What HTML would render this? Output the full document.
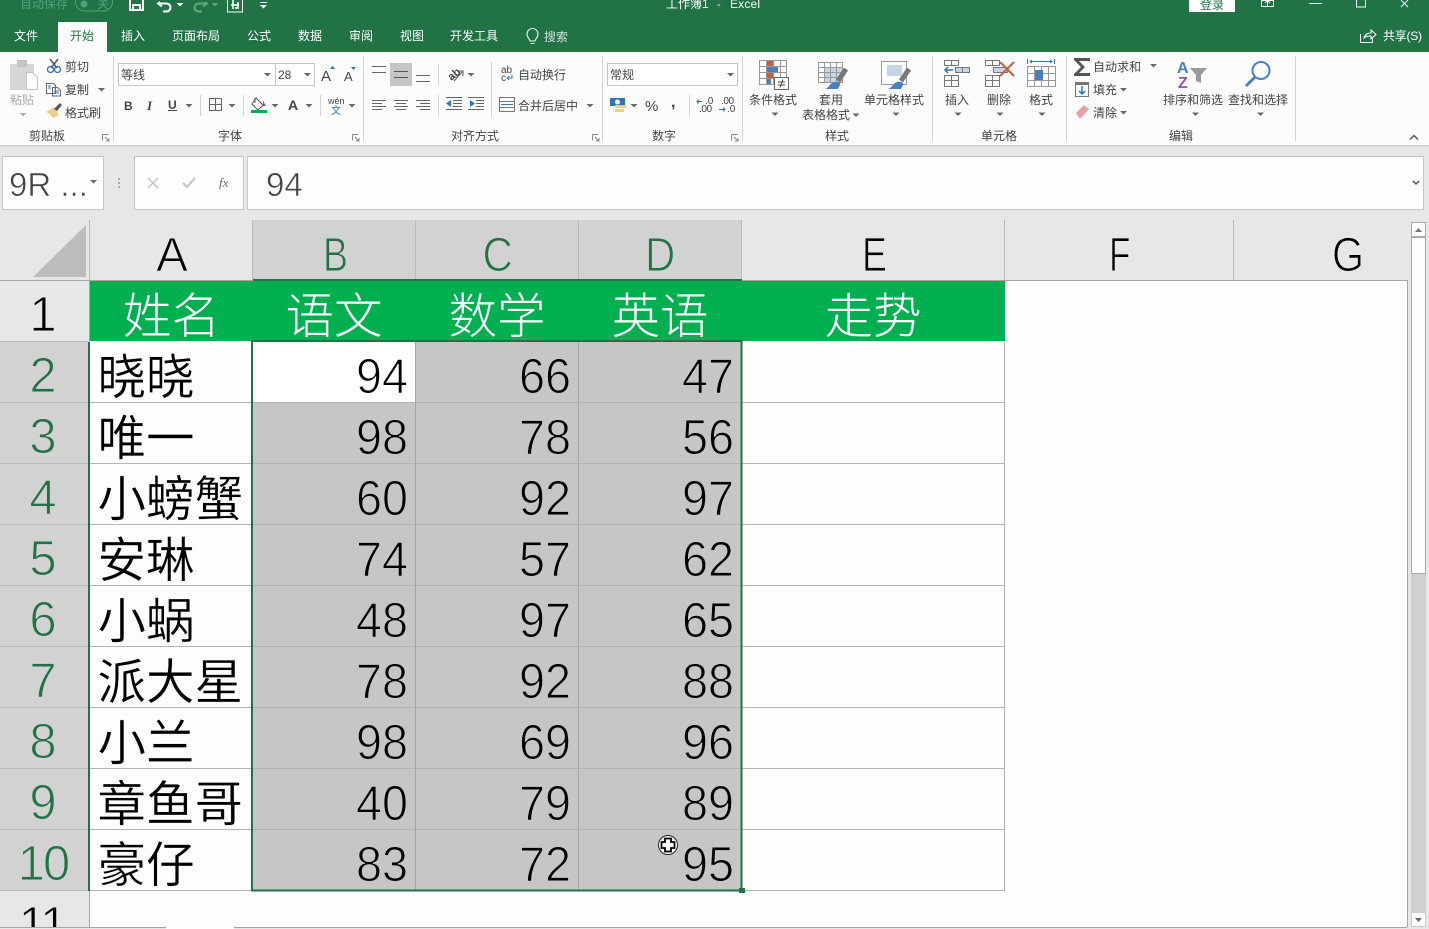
<!DOCTYPE html>
<html lang="zh"><head><meta charset="utf-8"><title>工作簿1 - Excel</title>
<style>
html,body{margin:0;padding:0;width:1429px;height:929px;overflow:hidden;background:#e6e7e7}
svg{position:absolute;left:0;top:0;display:block}
text{font-family:"Liberation Sans","Noto Sans CJK SC",sans-serif;white-space:pre}
.s{font-size:12px;fill:#444}
.w{font-size:12px;fill:#fff}
.cj{font-size:48.5px;fill:#000;font-family:"Noto Sans CJK SC",sans-serif;font-weight:400;stroke:#fdfdfd;stroke-width:.35px}
.hw{font-size:48.5px;fill:#fff;font-family:"Noto Sans CJK SC",sans-serif;font-weight:300;text-anchor:middle}
.n{font-size:49px;fill:#000;stroke:#c6c6c6;stroke-width:1.1px}
.nw{stroke:#fff}
.col{font-size:48px;fill:#000;stroke:#e6e7e7;stroke-width:1.1px}
.colg{font-size:48px;fill:#217346;stroke:#d2d2d2;stroke-width:1.1px}
.rg{font-size:49px;fill:#217346;text-anchor:middle;letter-spacing:-2px;stroke:#d2d2d2;stroke-width:1.1px}
.rb{font-size:49px;fill:#000;text-anchor:middle;letter-spacing:-2px;stroke:#e6e7e7;stroke-width:1.1px}
.ar{fill:#666}
</style></head><body>
<svg width="1429" height="929" viewBox="0 0 1429 929" xmlns="http://www.w3.org/2000/svg">
<defs><path id="a" d="M-3.5 0h7L0 3.5z"/></defs>
<!-- backgrounds -->
<rect width="1429" height="929" fill="#e6e7e7"/>
<rect width="1429" height="52" fill="#217346"/>
<rect y="52" width="1429" height="93" fill="#fcfcfc"/>
<rect y="145" width="1429" height="1.5" fill="#d2d2d2"/>
<!-- title bar -->
<text x="20" y="8" style="font-size:12px;fill:#52a078">自动保存</text>
<rect x="75.500" y="-7" width="37" height="18" rx="9" fill="none" stroke="#52a078"/>
<circle cx="84" cy="4" r="3.500" fill="#52a078"/>
<text x="97" y="8" fill="#52a078" style="font-size:12px">关</text>
<path d="M130 0v10h13V0M133 10V5h7v5" fill="none" stroke="#fff" stroke-width="2"/>
<path d="M160 2l-2 1.500 4 3M159 3.500h7c6 0 6 8 0 8h-3" fill="none" stroke="#fff" stroke-width="2"/>
<use href="#a" x="180" y="3" fill="#dfe" />
<path d="M205 2l2 1.500-4 3M206 3.500h-7c-6 0-6 8 0 8h3" fill="none" stroke="#63a483" stroke-width="2"/>
<use href="#a" x="215" y="3" fill="#63a483"/>
<rect x="227.500" y="-3" width="15" height="15" fill="none" stroke="#fff"/><path d="M233 0v9M231 5h8M238 2v6l-3 0" fill="none" stroke="#fff" stroke-width="1.500"/>
<rect x="260" y="2" width="7" height="1" fill="#fff"/><use href="#a" x="263.500" y="5" fill="#fff"/>
<text x="666" y="8" class="w">工作簿1</text>
<text x="717" y="8" class="w" style="font-size:11px">-</text>
<text x="730" y="8" class="w" style="font-size:12px" textLength="30">Excel</text>
<rect x="1189" y="-2" width="46" height="14" rx="1" fill="#fff"/>
<text x="1200" y="9" style="font-size:12px;fill:#217346">登录</text>
<path d="M1261.500 0.500h12v6h-12zM1267.500 6V1M1265 3l2.500-2.500L1270 3" fill="none" stroke="#fff"/>
<rect x="1309" y="3" width="13" height="1" fill="#fff"/>
<path d="M1356.500-1h9v8h-9z" fill="none" stroke="#fff"/>
<path d="M1401 0l7 7M1408 0l-7 7" fill="none" stroke="#fff"/>
<!-- tabs -->
<rect x="58" y="22" width="49" height="30" fill="#fcfcfc"/>
<text x="14" y="40" class="w">文件</text>
<text x="70" y="40" style="font-size:12px;fill:#217346">开始</text>
<text x="121" y="40" class="w">插入</text>
<text x="172" y="40" class="w">页面布局</text>
<text x="247" y="40" class="w">公式</text>
<text x="298" y="40" class="w">数据</text>
<text x="349" y="40" class="w">审阅</text>
<text x="400" y="40" class="w">视图</text>
<text x="450" y="40" class="w">开发工具</text>
<path d="M530 41c0-2-3-3-3-7a5.500 5.500 0 0 1 11 0c0 4-3 5-3 7zM530.500 43.500h4" fill="none" stroke="#e6f0ea" stroke-width="1.100"/>
<text x="544" y="41" style="font-size:12px;fill:#d0e0d7">搜索</text>
<path d="M1360.500 34v8.500h12V38M1364 38c1-4 4-5 7-5v-3l5 4.500-5 4.500v-3c-3 0-5 0-7 2z" fill="none" stroke="#fff"/>
<text x="1383" y="40" class="w" textLength="39">共享(S)</text>
<!-- ribbon separators -->
<g fill="#d4d4d4">
<rect x="113" y="56" width="1" height="85"/><rect x="363" y="56" width="1" height="85"/><rect x="602" y="56" width="1" height="85"/><rect x="742" y="56" width="1" height="85"/><rect x="932" y="56" width="1" height="85"/><rect x="1066" y="56" width="1" height="85"/><rect x="1295" y="56" width="1" height="85"/>
<rect x="200" y="95" width="1" height="21"/><rect x="243" y="95" width="1" height="21"/><rect x="320" y="95" width="1" height="21"/><rect x="438" y="64" width="1" height="21"/><rect x="438" y="95" width="1" height="21"/><rect x="491" y="62" width="1" height="55"/><rect x="689" y="95" width="1" height="21"/>
</g>
<!-- clipboard -->
<rect x="10" y="64" width="24" height="26" fill="#d6d6d6"/><rect x="17" y="60" width="10" height="7" fill="#c4c4c4"/>
<path d="M26.500 72.500h6l5 5v12h-11z" fill="#fcfcfc" stroke="#c4c4c4"/>
<text x="10" y="104" style="font-size:12px;fill:#aaa">粘贴</text>
<use href="#a" x="23" y="113" fill="#b0b0b0"/>
<path d="M50 59l7 9M58 59l-7 9" stroke="#555" stroke-width="1.500" fill="none"/><circle cx="50.500" cy="69.500" r="3" fill="none" stroke="#2e75b6" stroke-width="1.300"/><circle cx="57.500" cy="69.500" r="3" fill="none" stroke="#2e75b6" stroke-width="1.300"/>
<text x="65" y="71" class="s">剪切</text>
<path d="M46.500 83.500h7l2 2v8h-9zM52.500 87.500h5l3 3v5.500h-8z" fill="#fff" stroke="#666"/><path d="M54 91h5M54 93h5M48 86h3M48 88h3" stroke="#3d78b5"/>
<text x="65" y="94" class="s">复制</text>
<use href="#a" x="101.500" y="88" class="ar"/>
<path d="M46 112l8-5 5 8-6 3c-2-3-4-5-7-6z" fill="#f2cd87"/><path d="M54 109l6-6 2 2-5 6z" fill="#555"/>
<text x="65" y="117" class="s">格式刷</text>
<text x="29" y="140" class="s">剪贴板</text>
<path id="l" d="M102.500 134.500h6M102.500 134.500v6M105 137l4 4M109 138v3h-3" fill="none" stroke="#888"/>
<!-- font -->
<rect x="118.500" y="63.500" width="157" height="22" fill="#fff" stroke="#c6c6c6"/>
<rect x="275.500" y="63.500" width="39" height="22" fill="#fff" stroke="#c6c6c6"/>
<text x="121" y="79" class="s">等线</text><use href="#a" x="267.500" y="73" class="ar"/>
<text x="278" y="79" class="s">28</text><use href="#a" x="307.500" y="73" class="ar"/>
<text x="321" y="81" style="font-size:15px;fill:#444">A</text><path d="M330 69h5l-2.500-3z" fill="#2e75b6"/>
<text x="344" y="81" style="font-size:13px;fill:#444">A</text><path d="M351 67h5l-2.500 3z" fill="#2e75b6"/>
<text x="124" y="110" style="font-size:12px;fill:#444;font-weight:bold">B</text>
<text x="147" y="110" style="font-size:13px;fill:#444;font-style:italic;font-family:'Liberation Serif',serif;font-weight:bold">I</text>
<text x="168" y="109" style="font-size:12px;fill:#444;font-weight:bold">U</text><rect x="168" y="110" width="9" height="1" fill="#444"/>
<use href="#a" x="189" y="104" class="ar"/>
<path d="M209.500 98.500h12v12h-12zM215.500 98.500v12M209.500 104.500h12" fill="none" stroke="#666"/>
<use href="#a" x="232" y="104" class="ar"/>
<path d="M256 98l7 7-5 5-6-6zM255 98v5" fill="#fff" stroke="#555"/><path d="M263 101l3 5h-3z" fill="#2e75b6"/>
<rect x="251" y="110" width="16" height="3" fill="#00b050"/>
<use href="#a" x="275" y="104" class="ar"/>
<text x="288" y="110" style="font-size:14px;fill:#444;font-weight:bold">A</text>
<use href="#a" x="309" y="104" class="ar"/>
<text x="328" y="104" style="font-size:9px;fill:#444">wén</text>
<text x="331" y="114" style="font-size:10px;fill:#2e75b6">文</text>
<use href="#a" x="352" y="104" class="ar"/>
<text x="218" y="140" class="s">字体</text>
<use href="#l" x="250" y="0"/>
<!-- align -->
<rect x="390" y="63" width="22" height="23" fill="#c6c6c6"/>
<g stroke="#666" fill="none">
<path d="M372 66.500h14M372 72.500h14"/>
<path d="M394 71.500h14M394 77.500h14" stroke="#555"/>
<path d="M416 75.500h14M416 81.500h14"/>
<path d="M372 100.500h14M372 103.500h10M372 106.500h14M372 109.500h10"/>
<path d="M394 100.500h14M396 103.500h10M394 106.500h14M396 109.500h10"/>
<path d="M416 100.500h14M420 103.500h10M416 106.500h14M420 109.500h10"/>
<path d="M453 100.500h9M453 103.500h9M453 106.500h9M446 109.500h16M446 97.500h16"/>
<path d="M476 100.500h8M476 103.500h8M476 106.500h8M468 109.500h16M468 97.500h16"/>
</g>
<path d="M446 103.500l5-3.500v7zM475 103.500l-5-3.500v7z" fill="#2e75b6"/>
<text x="447" y="79" transform="rotate(-40 452 74)" style="font-size:11px;fill:#444;font-weight:bold">ab</text>
<path d="M454 81l8-9M458 71h5v5" fill="none" stroke="#555"/>
<use href="#a" x="471" y="73" class="ar"/>
<text x="501" y="73" style="font-size:10px;fill:#444">ab</text><text x="501" y="81" style="font-size:10px;fill:#444">c</text><path d="M512 75v3h-4M509 76l-2 2 2 2" fill="none" stroke="#2e75b6"/>
<text x="518" y="79" class="s">自动换行</text>
<path d="M499.500 97.500h15v14h-15zM499.500 101.500h15M499.500 107.500h15" fill="none" stroke="#777"/><rect x="500" y="102" width="14" height="5" fill="#fcfcfc"/><path d="M501 104.500h12" stroke="#2e75b6"/>
<text x="518" y="110" class="s">合并后居中</text>
<use href="#a" x="590" y="104" class="ar"/>
<text x="451" y="140" class="s">对齐方式</text>
<use href="#l" x="490" y="0"/>
<!-- number -->
<rect x="607.500" y="63.500" width="130" height="22" fill="#fff" stroke="#c6c6c6"/>
<text x="610" y="79" class="s">常规</text><use href="#a" x="730.500" y="73" class="ar"/>
<rect x="610" y="98" width="15" height="8" fill="#2e75b6"/><circle cx="617.500" cy="102" r="2.500" fill="#fff"/><rect x="615" y="105" width="11" height="3" fill="#f2cd87"/><rect x="615" y="109" width="9" height="3" fill="#f2cd87"/>
<use href="#a" x="634" y="104" class="ar"/>
<text x="645" y="111" style="font-size:15px;fill:#444">%</text>
<text x="671" y="107" style="font-size:16px;fill:#444;font-weight:bold">,</text>
<text x="705" y="104" style="font-size:10px;fill:#444">.0</text><text x="699" y="112" style="font-size:10px;fill:#444" textLength="13">.00</text>
<path d="M697 101.500h5M699 99.500l-2 2 2 2" stroke="#2e75b6" fill="none"/>
<text x="721" y="104" style="font-size:10px;fill:#444" textLength="13">.00</text><text x="727" y="112" style="font-size:10px;fill:#444">.0</text>
<path d="M719 109.500h6M723 107.500l2 2-2 2" stroke="#2e75b6" fill="none"/>
<text x="652" y="140" class="s">数字</text>
<use href="#l" x="629" y="0"/>
<!-- styles: conditional -->
<path d="M759.500 60.500h27v24h-27zM759.500 66.500h27M759.500 72.500h27M759.500 78.500h27M766.500 60.500v24M773.500 60.500v24M780.500 60.500v24" fill="#fff" stroke="#999"/>
<rect x="767" y="61" width="6" height="5" fill="#c8603f"/><rect x="767" y="67" width="11" height="5" fill="#4a80bd"/><rect x="767" y="73" width="6" height="5" fill="#c8603f"/><rect x="767" y="79" width="4" height="5" fill="#4a80bd"/>
<rect x="774.500" y="77.500" width="14" height="12" fill="#fff" stroke="#666"/>
<path d="M778 82h7M778 85h7M783 79.500l-3 8" stroke="#444" fill="none"/>
<text x="749" y="104" class="s">条件格式</text><use href="#a" x="775" y="112.500" class="ar"/>
<!-- table format -->
<path d="M818.500 62.500h24v20h-24z" fill="#fff" stroke="#999"/><rect x="825" y="68" width="17" height="14" fill="#c6d5e6"/>
<path d="M818.500 67.500h24M818.500 72.500h24M818.500 77.500h24M824.500 62.500v20M830.500 62.500v20M836.500 62.500v20" fill="none" stroke="#999"/>
<path d="M846 69l-8 12" stroke="#777" stroke-width="5" fill="none"/><path d="M825 89c4-1 5-6 9-7 3-1 7 0 6 3l-2 4z" fill="#4a80bd"/>
<text x="819" y="104" class="s">套用</text>
<text x="802" y="119" class="s">表格格式</text><use href="#a" x="856" y="113.500" class="ar"/>
<!-- cell styles -->
<path d="M881.500 61.500h25v23h-25z" fill="#fff" stroke="#999"/><rect x="887" y="65" width="15" height="11" fill="#c6d5e6"/>
<path d="M909 69l-8 12" stroke="#777" stroke-width="5" fill="none"/><path d="M888 89c4-1 5-6 9-7 3-1 7 0 6 3l-2 4z" fill="#4a80bd"/>
<text x="864" y="104" class="s">单元格样式</text><use href="#a" x="896" y="112.500" class="ar"/>
<text x="825" y="140" class="s">样式</text>
<!-- cells -->
<g fill="none" stroke="#777">
<path d="M944.500 60.500h14v5h-14zM951.500 60.500v5M944.500 75.500h14v11h-14zM951.500 75.500v11M944.500 80.500h14"/>
<path d="M955.500 67.500h14v5h-14zM962.500 67.500v5" fill="#c6d5e6"/>
<path d="M985.500 60.500h14v5h-14zM992.500 60.500v5M985.500 75.500h14v11h-14zM992.500 75.500v11M985.500 80.500h14"/>
<path d="M993.500 67.500h14v5h-14z" fill="#c6d5e6"/>
</g>
<path d="M945 70h8M948 67l-3 3 3 3" fill="none" stroke="#2e75b6" stroke-width="1.500"/>
<path d="M1000 62l14 14M1014 62l-14 14" stroke="#c8603f" stroke-width="2" fill="none"/>
<path d="M1027.500 66.500h28v20h-28zM1027.500 73.500h28M1027.500 80.500h28M1034.500 66.500v20M1041.500 66.500v20M1048.500 66.500v20" fill="#fff" stroke="#999"/>
<rect x="1035" y="70" width="8" height="10" fill="#4a80bd"/>
<path d="M1027.500 59v5M1054.500 59v5M1030 61.500h22M1032 60l-2 1.500 2 1.500M1050 60l2 1.500-2 1.500" stroke="#2e75b6" fill="none"/>
<text x="945" y="104" class="s">插入</text><use href="#a" x="958" y="112.500" class="ar"/>
<text x="987" y="104" class="s">删除</text><use href="#a" x="1000" y="112.500" class="ar"/>
<text x="1029" y="104" class="s">格式</text><use href="#a" x="1042" y="112.500" class="ar"/>
<text x="981" y="140" class="s">单元格</text>
<!-- edit -->
<path d="M1074 58h16v3h-11l6 6-6 6h11v3h-16v-2l7-7-7-7z" fill="#555"/>
<text x="1093" y="71" class="s">自动求和</text><use href="#a" x="1153.500" y="64" class="ar"/>
<rect x="1075.500" y="82.500" width="13" height="14" fill="#fff" stroke="#777"/><rect x="1075" y="82" width="14" height="3" fill="#777"/>
<path d="M1082 86v8M1079 91l3 3 3-3" fill="none" stroke="#2e75b6" stroke-width="1.500"/>
<text x="1093" y="94" class="s">填充</text><use href="#a" x="1123.500" y="88" class="ar"/>
<path d="M1076 113l8-8 5 4-8 9h-2z" fill="#e8a0a8"/>
<text x="1093" y="117" class="s">清除</text><use href="#a" x="1123.500" y="111" class="ar"/>
<text x="1177" y="73" style="font-size:16px;fill:#4a80bd;font-weight:bold">A</text>
<text x="1178" y="88" style="font-size:16px;fill:#8b5ca8;font-weight:bold">Z</text>
<path d="M1190 68h17l-6 7v8l-5-2v-6z" fill="#999"/>
<text x="1163" y="104" class="s">排序和筛选</text><use href="#a" x="1195.500" y="112.500" class="ar"/>
<circle cx="1261" cy="70.500" r="8.500" fill="#fff" stroke="#4a80bd" stroke-width="2"/>
<path d="M1255 77l-9 9" stroke="#4a80bd" stroke-width="3"/>
<text x="1228" y="104" class="s">查找和选择</text><use href="#a" x="1260.500" y="112.500" class="ar"/>
<text x="1169" y="140" class="s">编辑</text>
<path d="M1410 139.500l4-4 4 4" fill="none" stroke="#555" stroke-width="1.500"/>
<!-- formula bar -->
<rect x="2.500" y="156.500" width="101" height="53" fill="#fdfdfd" stroke="#c6c6c6"/>
<text x="9" y="196" style="font-size:33px;fill:#444;stroke:#fdfdfd;stroke-width:.6px">9R ...</text>
<use href="#a" x="93.500" y="180" class="ar"/>
<g fill="#aaa"><rect x="118" y="178" width="2" height="2"/><rect x="118" y="182" width="2" height="2"/><rect x="118" y="186" width="2" height="2"/></g>
<rect x="134.500" y="156.500" width="109" height="53" fill="#fdfdfd" stroke="#c6c6c6"/>
<path d="M148 178l10 10M158 178l-10 10" stroke="#c4c4c4" stroke-width="1.500" fill="none"/>
<path d="M183 183l4 4 8-9" stroke="#c4c4c4" stroke-width="2" fill="none"/>
<text x="219" y="187" style="font-size:13px;fill:#666;font-style:italic;font-family:'Liberation Serif',serif">fx</text>
<rect x="247.500" y="156.500" width="1176" height="53" fill="#fdfdfd" stroke="#c6c6c6"/>
<text x="266" y="196" style="font-size:33px;fill:#444;stroke:#fdfdfd;stroke-width:.6px">94</text>
<path d="M1413 181l3 3 3-3" stroke="#555" stroke-width="1.500" fill="none"/>
<!-- sheet body -->
<rect x="90" y="281" width="1317" height="646" fill="#fdfdfd"/>
<!-- headers -->
<rect x="253" y="220" width="489" height="60" fill="#d2d2d2"/>
<rect x="0" y="342" width="88" height="549" fill="#d2d2d2"/>
<path d="M33 277L86 225V277z" fill="#bcbcbc"/>
<g fill="#bbb">
<rect x="89" y="220" width="1" height="60"/><rect x="252" y="220" width="1" height="60"/><rect x="415" y="220" width="1" height="60"/><rect x="578" y="220" width="1" height="60"/><rect x="741" y="220" width="1" height="60"/><rect x="1004" y="220" width="1" height="60"/><rect x="1233" y="220" width="1" height="60"/>
<rect y="341" width="88" height="1"/><rect y="402" width="88" height="1"/><rect y="463" width="88" height="1"/><rect y="524" width="88" height="1"/><rect y="585" width="88" height="1"/><rect y="646" width="88" height="1"/><rect y="707" width="88" height="1"/><rect y="768" width="88" height="1"/><rect y="829" width="88" height="1"/><rect y="890" width="88" height="1"/>
</g>
<rect x="0" y="280" width="1408" height="1" fill="#a6a6a6"/>
<rect x="253" y="279" width="489" height="2" fill="#217346"/>
<rect x="1407" y="281" width="1" height="646" fill="#a6a6a6"/>
<rect x="89" y="281" width="1" height="61" fill="#a6a6a6"/><rect x="89" y="891" width="1" height="37" fill="#a6a6a6"/>
<rect x="88" y="342" width="2" height="549" fill="#217346"/>
<!-- title row -->
<rect x="90" y="281" width="915" height="60" fill="#00b050"/>
<!-- selection fill -->
<rect x="253" y="342" width="489" height="549" fill="#c6c6c6"/>
<rect x="253" y="342" width="162" height="60" fill="#fff"/>
<!-- gridlines -->
<g fill="#b4b4b4">
<rect x="90" y="402" width="915" height="1"/><rect x="90" y="463" width="915" height="1"/><rect x="90" y="524" width="915" height="1"/><rect x="90" y="585" width="915" height="1"/><rect x="90" y="646" width="915" height="1"/><rect x="90" y="707" width="915" height="1"/><rect x="90" y="768" width="915" height="1"/><rect x="90" y="829" width="915" height="1"/><rect x="90" y="890" width="915" height="1"/>
<rect x="1004" y="342" width="1" height="549"/>
<rect x="415" y="342" width="1" height="549" fill="#a6a6a6"/><rect x="578" y="342" width="1" height="549" fill="#a6a6a6"/>
</g>
<!-- selection border -->
<rect x="252" y="341" width="489.500" height="549.500" fill="none" stroke="#217346" stroke-width="2"/>
<rect x="739" y="888" width="6" height="5" fill="#217346"/>
<!-- column labels -->
<text x="156" y="271" class="col">A</text>
<text x="323" y="271" class="colg" textLength="25" lengthAdjust="spacingAndGlyphs">B</text>
<text x="482.500" y="271" class="colg" textLength="30.300" lengthAdjust="spacingAndGlyphs">C</text>
<text x="645" y="271" class="colg" textLength="30.300" lengthAdjust="spacingAndGlyphs">D</text>
<text x="862" y="271" class="col" textLength="25" lengthAdjust="spacingAndGlyphs">E</text>
<text x="1109" y="271" class="col" textLength="21.500" lengthAdjust="spacingAndGlyphs">F</text>
<text x="1332" y="271" class="col" textLength="32" lengthAdjust="spacingAndGlyphs">G</text>
<!-- row labels -->
<text x="42" y="331" class="rb">1</text>
<text x="42" y="392" class="rg">2</text>
<text x="42" y="453" class="rg">3</text>
<text x="42" y="514" class="rg">4</text>
<text x="42" y="575" class="rg">5</text>
<text x="42" y="636" class="rg">6</text>
<text x="42" y="697" class="rg">7</text>
<text x="42" y="758" class="rg">8</text>
<text x="42" y="819" class="rg">9</text>
<text x="43" y="880" class="rg">10</text>
<text x="42" y="941" class="rb">11</text>
<!-- header row -->
<text x="171.500" y="333" class="hw">姓名</text>
<text x="334" y="333" class="hw">语文</text>
<text x="497" y="333" class="hw">数学</text>
<text x="660" y="333" class="hw">英语</text>
<text x="873" y="333" class="hw">走势</text>
<!-- names -->
<text x="97.500" y="394" class="cj">晓晓</text>
<text x="97.500" y="455" class="cj">唯一</text>
<text x="97.500" y="516" class="cj">小螃蟹</text>
<text x="97.500" y="577" class="cj">安琳</text>
<text x="97.500" y="638" class="cj">小蜗</text>
<text x="97.500" y="699" class="cj">派大星</text>
<text x="97.500" y="760" class="cj">小兰</text>
<text x="97.500" y="821" class="cj">章鱼哥</text>
<text x="97.500" y="882" class="cj">豪仔</text>
<!-- numbers -->
<text x="356" y="393" class="n nw" textLength="52" lengthAdjust="spacingAndGlyphs">94</text><text x="519" y="393" class="n" textLength="52" lengthAdjust="spacingAndGlyphs">66</text><text x="682" y="393" class="n" textLength="52" lengthAdjust="spacingAndGlyphs">47</text>
<text x="356" y="454" class="n" textLength="52" lengthAdjust="spacingAndGlyphs">98</text><text x="519" y="454" class="n" textLength="52" lengthAdjust="spacingAndGlyphs">78</text><text x="682" y="454" class="n" textLength="52" lengthAdjust="spacingAndGlyphs">56</text>
<text x="356" y="515" class="n" textLength="52" lengthAdjust="spacingAndGlyphs">60</text><text x="519" y="515" class="n" textLength="52" lengthAdjust="spacingAndGlyphs">92</text><text x="682" y="515" class="n" textLength="52" lengthAdjust="spacingAndGlyphs">97</text>
<text x="356" y="576" class="n" textLength="52" lengthAdjust="spacingAndGlyphs">74</text><text x="519" y="576" class="n" textLength="52" lengthAdjust="spacingAndGlyphs">57</text><text x="682" y="576" class="n" textLength="52" lengthAdjust="spacingAndGlyphs">62</text>
<text x="356" y="637" class="n" textLength="52" lengthAdjust="spacingAndGlyphs">48</text><text x="519" y="637" class="n" textLength="52" lengthAdjust="spacingAndGlyphs">97</text><text x="682" y="637" class="n" textLength="52" lengthAdjust="spacingAndGlyphs">65</text>
<text x="356" y="698" class="n" textLength="52" lengthAdjust="spacingAndGlyphs">78</text><text x="519" y="698" class="n" textLength="52" lengthAdjust="spacingAndGlyphs">92</text><text x="682" y="698" class="n" textLength="52" lengthAdjust="spacingAndGlyphs">88</text>
<text x="356" y="759" class="n" textLength="52" lengthAdjust="spacingAndGlyphs">98</text><text x="519" y="759" class="n" textLength="52" lengthAdjust="spacingAndGlyphs">69</text><text x="682" y="759" class="n" textLength="52" lengthAdjust="spacingAndGlyphs">96</text>
<text x="356" y="820" class="n" textLength="52" lengthAdjust="spacingAndGlyphs">40</text><text x="519" y="820" class="n" textLength="52" lengthAdjust="spacingAndGlyphs">79</text><text x="682" y="820" class="n" textLength="52" lengthAdjust="spacingAndGlyphs">89</text>
<text x="356" y="881" class="n" textLength="52" lengthAdjust="spacingAndGlyphs">83</text><text x="519" y="881" class="n" textLength="52" lengthAdjust="spacingAndGlyphs">72</text><text x="682" y="881" class="n" textLength="52" lengthAdjust="spacingAndGlyphs">95</text>
<!-- cursor -->
<circle cx="668" cy="845" r="9.500" fill="#fff" stroke="#222" stroke-width="1"/>
<path d="M665 838.500h6v3.500h3.500v6H671v3.500h-6V848h-3.500v-6h3.500z" fill="#fff" stroke="#000" stroke-width="1.800"/>
<!-- scrollbar -->
<rect x="1411" y="222" width="15" height="705" fill="#d0d0d0"/>
<rect x="1411.500" y="222.500" width="14" height="14" fill="#fdfdfd" stroke="#aaa"/>
<path d="M1415 232h7l-3.500-4z" fill="#777"/>
<rect x="1411.500" y="237.500" width="14" height="336" fill="#fdfdfd" stroke="#aaa"/>
<rect x="1411.500" y="912.500" width="14" height="14" fill="#fdfdfd" stroke="#ccc"/>
<path d="M1415 918h7l-3.500 4z" fill="#666"/>
<!-- bottom tab strip -->
<rect x="0" y="927" width="1429" height="2" fill="#e6e7e7"/>
<rect x="0" y="927" width="166" height="1" fill="#a6a6a6"/>
<rect x="166" y="926" width="68" height="3" fill="#fdfdfd"/>
<rect x="234" y="927" width="1173" height="1" fill="#a6a6a6"/>
</svg>
</body></html>
